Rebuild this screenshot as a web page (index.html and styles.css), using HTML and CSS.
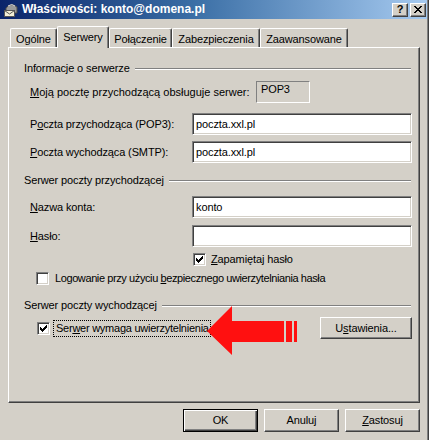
FILE: index.html
```html
<!DOCTYPE html>
<html lang="pl">
<head>
<meta charset="utf-8">
<title>Właściwości: konto@domena.pl</title>
<link rel="stylesheet" href="styles.css">
</head>
<body>
<div class="window">
  <div class="titlebar">
    <svg class="app-icon" width="16" height="16" viewBox="0 0 16 16">
      <path d="M3 6 Q8 0 14 5 L14 11 L3 11 Z" fill="#9a9a9a" stroke="#4a4a4a" stroke-width="1"/>
      <path d="M5 4 Q9 1 12 4" fill="none" stroke="#d8d8d8" stroke-width="1"/>
      <rect x="1.5" y="8.5" width="10" height="6" fill="#f4f0d8" stroke="#555" stroke-width="1"/>
      <path d="M1.5 8.5 L6.5 12 L11.5 8.5" fill="none" stroke="#555" stroke-width="1"/>
    </svg>
    <span class="title">Właściwości: konto@domena.pl</span>
    <div class="caption-btns">
      <div class="cap cap-help">?</div>
      <div class="cap">
        <svg width="8" height="7" viewBox="0 0 8 7" shape-rendering="crispEdges">
          <path d="M0 0h2v1h-2z M6 0h2v1h-2z M1 1h2v1h-2z M5 1h2v1h-2z M2 2h4v1h-4z M3 3h2v1h-2z M2 4h4v1h-4z M1 5h2v1h-2z M5 5h2v1h-2z M0 6h2v1h-2z M6 6h2v1h-2z" fill="#000"/>
        </svg>
      </div>
    </div>
  </div>
  <div class="client">
    <div class="tabs">
      <div class="tab tab-ogolne">Ogólne</div>
      <div class="tab tab-serwery selected">Serwery</div>
      <div class="tab tab-polaczenie">Połączenie</div>
      <div class="tab tab-zabezp">Zabezpieczenia</div>
      <div class="tab tab-zaaw">Zaawansowane</div>
    </div>
    <div class="panel">
      <div class="group g1"><span>Informacje o serwerze</span><div class="group-line"></div></div>

      <div class="field-row r-moja">
        <span class="moja-label"><u>M</u>oją pocztę przychodzącą obsługuje serwer:</span>
        <div class="ro-box">POP3</div>
      </div>

      <div class="field-row r-pop3">
        <span class="field-label">P<u>o</u>czta przychodząca (POP3):</span>
        <div class="input">poczta.xxl.pl</div>
      </div>

      <div class="field-row r-smtp">
        <span class="field-label"><u>P</u>oczta wychodząca (SMTP):</span>
        <div class="input">poczta.xxl.pl</div>
      </div>

      <div class="group g2"><span>Serwer poczty przychodzącej</span><div class="group-line"></div></div>

      <div class="field-row r-nazwa">
        <span class="field-label"><u>N</u>azwa konta:</span>
        <div class="input">konto</div>
      </div>

      <div class="field-row r-haslo">
        <span class="field-label"><u>H</u>asło:</span>
        <div class="input"></div>
      </div>

      <div class="check-row r-zapamietaj">
        <div class="checkbox">
          <svg width="7" height="7" viewBox="0 0 7 7" shape-rendering="crispEdges"><path d="M0 2h1v3h-1z M1 3h1v3h-1z M2 4h1v3h-1z M3 3h1v3h-1z M4 2h1v3h-1z M5 1h1v3h-1z M6 0h1v3h-1z" fill="#000"/></svg>
        </div>
        <span class="check-text"><u>Z</u>apamiętaj hasło</span>
      </div>

      <div class="check-row r-logowanie">
        <div class="checkbox"></div>
        <span class="check-text">Logowanie przy użyciu <u>b</u>ezpiecznego uwierzytelniania hasła</span>
      </div>

      <div class="group g3"><span>Serwer poczty wychodzącej</span><div class="group-line"></div></div>

      <div class="last-row">
        <div class="checkbox">
          <svg width="7" height="7" viewBox="0 0 7 7" shape-rendering="crispEdges"><path d="M0 2h1v3h-1z M1 3h1v3h-1z M2 4h1v3h-1z M3 3h1v3h-1z M4 2h1v3h-1z M5 1h1v3h-1z M6 0h1v3h-1z" fill="#000"/></svg>
        </div>
        <span class="focus-label">Ser<u>w</u>er wymaga uwierzytelnienia</span>
        <div class="btn btn-settings">U<u>s</u>tawienia...</div>
      </div>
    </div>
    <div class="buttons">
      <div class="btn btn-default">OK</div>
      <div class="btn">Anuluj</div>
      <div class="btn"><u>Z</u>astosuj</div>
    </div>
  </div>
</div>
<svg class="arrow" width="432" height="440" viewBox="0 0 432 440">
  <polygon points="207,331 232,306 232,321 284,321 284,342 232,342 232,355" fill="#ff1010"/>
  <rect x="286" y="321" width="6" height="21" fill="#ff1010"/>
  <rect x="294" y="321" width="3" height="21" fill="#ff1010"/>
</svg>
</body>
</html>
```
FILE: styles.css
```css
* { box-sizing: border-box; }

body {
  margin: 0;
  width: 432px;
  height: 440px;
  overflow: hidden;
  position: relative;
  background: #ffffff;
  font-family: "Liberation Sans", Arial, sans-serif;
  font-size: 11px;
  line-height: 13px;
  letter-spacing: -0.12px;
  color: #000;
}

u { text-decoration: underline; text-underline-offset: 1px; }

.window {
  width: 429px;
  height: 440px;
  background: #d4d0c8;
  border-right: 1px solid #404040;
  box-shadow: inset -1px 0 #808080;
  display: flex;
  flex-direction: column;
}

.titlebar {
  height: 19px;
  margin-right: 1px;
  background: linear-gradient(to right, #0a246a 0%, #3a6ea5 45%, #a6caf0 100%);
  display: flex;
  align-items: center;
}

.app-icon { margin-left: 3px; flex: none; }

.title {
  margin-left: 3px;
  color: #fff;
  font-weight: bold;
  font-size: 12px;
  letter-spacing: 0;
}

.caption-btns {
  margin-left: auto;
  margin-right: 1px;
  display: flex;
  gap: 2px;
}

.cap {
  width: 16px;
  height: 14px;
  background: #d4d0c8;
  border-top: 1px solid #fff;
  border-left: 1px solid #fff;
  border-right: 1px solid #404040;
  border-bottom: 1px solid #404040;
  box-shadow: inset -1px -1px #808080;
  display: flex;
  align-items: center;
  justify-content: center;
}

.cap-help {
  font-weight: bold;
  font-size: 11px;
  line-height: 11px;
}

.client {
  padding-left: 8px;
  padding-right: 8px;
  flex: 1;
  display: flex;
  flex-direction: column;
}

.tabs {
  display: flex;
  align-items: flex-end;
  height: 21px;
  margin-top: 7px;
  padding-left: 2px;
  position: relative;
  z-index: 1;
}

.tab {
  height: 19px;
  background: #d4d0c8;
  border-top: 1px solid #fff;
  border-left: 1px solid #fff;
  border-right: 1px solid #404040;
  border-radius: 2px 2px 0 0;
  box-shadow: inset -1px 0 #808080;
  text-align: center;
  padding-top: 4px;
  white-space: nowrap;
}

.tab.selected {
  height: 22px;
  margin-bottom: -1px;
  padding-top: 4px;
}

.tab-ogolne { width: 47px; }
.tab-serwery { width: 52px; }
.tab-polaczenie { width: 63px; }
.tab-zabezp { width: 88px; }
.tab-zaaw { width: 88px; }

.panel {
  height: 356px;
  border-top: 1px solid #fff;
  border-left: 1px solid #fff;
  border-right: 1px solid #404040;
  border-bottom: 1px solid #404040;
  box-shadow: inset -1px -1px #808080;
  display: flex;
  flex-direction: column;
  white-space: nowrap;
}

.group {
  display: flex;
  align-items: center;
  height: 13px;
  padding-left: 15px;
  padding-right: 8px;
}

.group-line {
  flex: 1;
  height: 2px;
  border-top: 1px solid #808080;
  border-bottom: 1px solid #fff;
  margin-left: 5px;
  margin-top: 1px;
}

.g1 { margin-top: 14px; }
.g2 { margin-top: 11px; }
.g3 { margin-top: 14px; }

.field-row {
  display: flex;
  align-items: center;
  height: 22px;
  padding-left: 21px;
  padding-right: 7px;
}

.r-moja { margin-top: 6px; align-items: flex-start; }
.r-pop3 { margin-top: 10px; }
.r-smtp { margin-top: 6px; }
.r-nazwa { margin-top: 9px; }
.r-haslo { margin-top: 7px; }

.moja-label { width: 226px; align-self: center; letter-spacing: 0; }

.ro-box {
  width: 54px;
  height: 22px;
  border-top: 1px solid #808080;
  border-left: 1px solid #808080;
  border-right: 1px solid #fff;
  border-bottom: 1px solid #fff;
  padding: 1px 0 0 4px;
}

.field-label { width: 162px; flex: none; }

.input {
  flex: 1;
  height: 22px;
  background: #fff;
  border-top: 1px solid #808080;
  border-left: 1px solid #808080;
  border-right: 1px solid #fff;
  border-bottom: 1px solid #fff;
  box-shadow: inset 1px 1px #404040, inset -1px -1px #d4d0c8;
  padding: 4px 0 0 3px;
}

.check-row {
  display: flex;
  align-items: center;
  height: 13px;
}

.r-zapamietaj { margin-top: 6px; padding-left: 184px; }
.r-logowanie { margin-top: 6px; padding-left: 27px; }

.checkbox {
  width: 13px;
  height: 13px;
  flex: none;
  background: #fff;
  border-top: 1px solid #808080;
  border-left: 1px solid #808080;
  border-right: 1px solid #fff;
  border-bottom: 1px solid #fff;
  box-shadow: inset 1px 1px #404040, inset -1px -1px #d4d0c8;
  display: flex;
  align-items: center;
  justify-content: center;
}

.check-text { margin-left: 5px; }
.r-logowanie .check-text { margin-left: 6px; letter-spacing: -0.4px; }

.last-row {
  display: flex;
  align-items: center;
  height: 22px;
  margin-top: 5px;
  padding-left: 28px;
  padding-right: 7px;
}

.focus-label {
  margin-left: 3px;
  padding: 1px 1px 1px 2px;
  border: 1px dotted #000;
  letter-spacing: -0.25px;
}

.btn {
  height: 23px;
  width: 75px;
  background: #d4d0c8;
  border-top: 1px solid #fff;
  border-left: 1px solid #fff;
  border-right: 1px solid #404040;
  border-bottom: 1px solid #404040;
  box-shadow: inset -1px -1px #808080;
  display: flex;
  align-items: center;
  justify-content: center;
}

.btn-settings {
  margin-left: auto;
  width: 92px;
  height: 22px;
}

.btn-default {
  border: 1px solid #000;
  box-shadow: inset 1px 1px #fff, inset -1px -1px #404040, inset -2px -2px #808080;
}

.buttons {
  display: flex;
  justify-content: flex-end;
  gap: 6px;
  margin-top: 6px;
}

.arrow {
  position: absolute;
  left: 0;
  top: 0;
  pointer-events: none;
}
```
